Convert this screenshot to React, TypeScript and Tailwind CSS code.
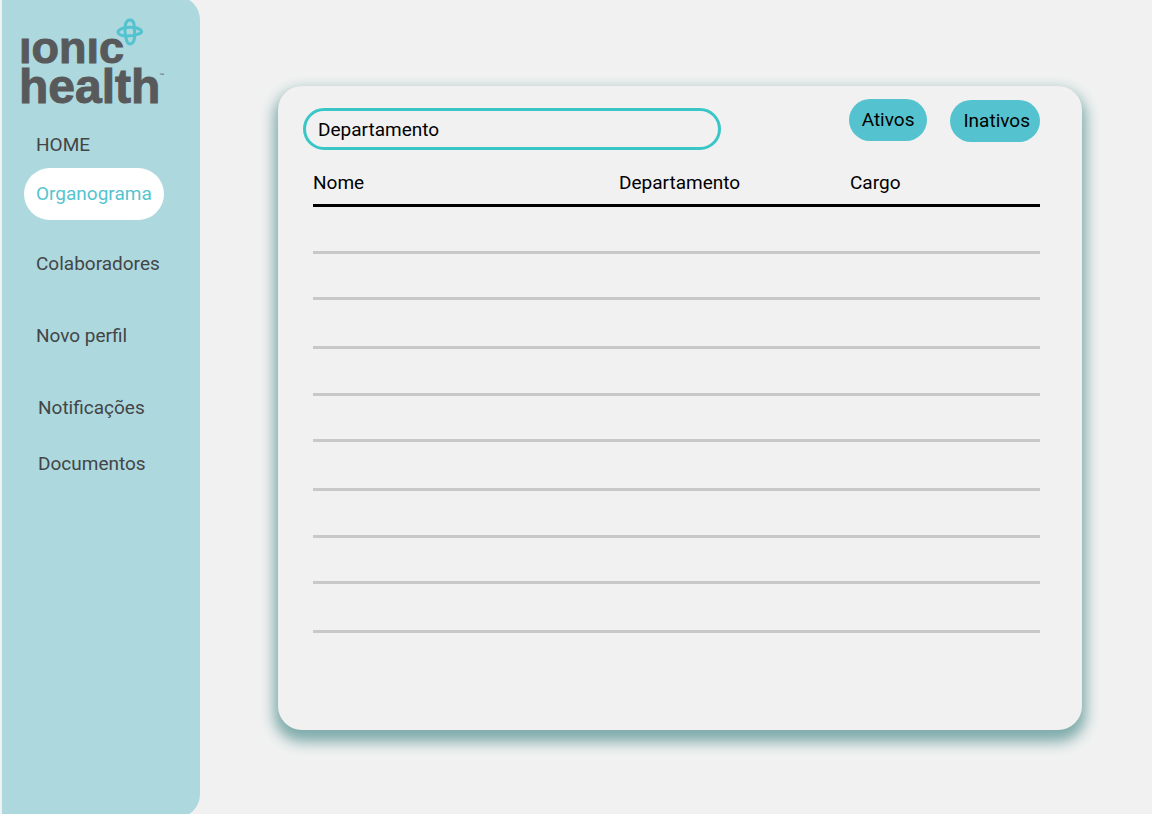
import React from "react";

const navItems = [
  { label: "HOME", className: "h-8 px-3" },
  { label: "Organograma", className: "mt-[7px] h-[52px] px-3 rounded-full bg-white text-[#55c4cf]", active: true },
  { label: "Colaboradores", className: "mt-7 h-8 px-3" },
  { label: "Novo perfil", className: "mt-10 h-8 px-3" },
  { label: "Notificações", className: "mt-10 h-8 pl-3.5" },
  { label: "Documentos", className: "mt-6 h-8 pl-3.5" },
];

const rows = Array.from({ length: 9 }, (_, i) => i);

function Logo() {
  return (
    <a href="#" className="relative block w-fit font-['Liberation_Sans',sans-serif] leading-[39px] font-bold text-[#58595b] [-webkit-text-stroke:1px_#58595b]">
      <span className="block text-[45px]">ıonıc</span>
      <span className="block text-[48px]">health</span>
      <svg className="absolute -top-2.5 left-[97px]" width="28" height="28" viewBox="0 0 28 28" fill="none" stroke="#52c3cf" aria-hidden="true">
        <path d="M9.500 6C11 0.500 17 0.500 18 6C18.500 11 19 16 18.500 20C17.500 27 12 28 10.500 22C9 17 8.500 11 9.500 6Z" strokeWidth="3" />
        <path d="M3.500 12C8 8.500 19 8.500 24 11.500C28 14.500 24 16 17 17.500C10 18.500 5 18 2.500 15.500C1.500 14 2 13 3.500 12Z" strokeWidth="3" />
      </svg>
      <span className="absolute -right-1 top-[45px] text-[5px] leading-none [-webkit-text-stroke:0]">™</span>
    </a>
  );
}

export default function App() {
  return (
    <div className="flex min-h-screen overflow-hidden bg-[#f1f1f1] font-['Roboto',sans-serif] text-[19px] leading-6">
      <aside className="-my-1 ml-0.5 w-[198px] shrink-0 rounded-r-3xl bg-[#add8de] pt-8">
        <div className="pl-[17px]">
          <Logo />
        </div>
        <nav className="mt-[23px] flex flex-col items-start pl-[22px] text-[#434547]">
          {navItems.map((item) => (
            <a key={item.label} href="#" aria-current={item.active ? "page" : undefined} className={`flex items-center ${item.className}`}>
              {item.label}
            </a>
          ))}
        </nav>
      </aside>

      <main className="flex min-w-0 flex-1 flex-col pt-[86px] pr-[70px] pb-[84px] pl-[78px]">
        <section className="flex-1 rounded-3xl bg-[#f1f1f1] pt-[13px] pr-[42px] pl-[25px] shadow-[0_8px_14px_4px_#7fabab]">
          <div className="flex items-start justify-between">
            <input
              type="text"
              aria-label="Departamento"
              placeholder="Departamento"
              className="mt-[9px] h-[42px] w-[418px] min-w-0 rounded-full border-3 border-[#3ac6c7] bg-transparent px-3 text-black outline-none placeholder:text-black placeholder:opacity-100"
            />
            <div className="flex gap-[23px]">
              <button type="button" className="h-[42px] rounded-full bg-[#54c3cf] px-[13px] text-black">Ativos</button>
              <button type="button" className="mt-px h-[42px] rounded-full bg-[#54c3cf] pr-2.5 pl-[13px] text-black">Inativos</button>
            </div>
          </div>

          <div className="mt-[15px] pl-2.5">
            <table className="w-full table-fixed border-collapse">
              <thead>
                <tr className="h-10 border-b-3 border-black text-left">
                  <th scope="col" className="p-0 pb-0.5 font-normal">Nome</th>
                  <th scope="col" className="w-[231px] p-0 pb-0.5 font-normal">Departamento</th>
                  <th scope="col" className="w-[190px] p-0 pb-0.5 font-normal">Cargo</th>
                </tr>
              </thead>
              <tbody>
                {rows.map((row) => (
                  <tr key={row} className="h-[47px] border-b-3 border-[#c8c8c8] nth-[3n]:h-[49px] nth-[3n+2]:h-[46px]">
                    <td />
                    <td />
                    <td />
                  </tr>
                ))}
              </tbody>
            </table>
          </div>
        </section>
      </main>
    </div>
  );
}
